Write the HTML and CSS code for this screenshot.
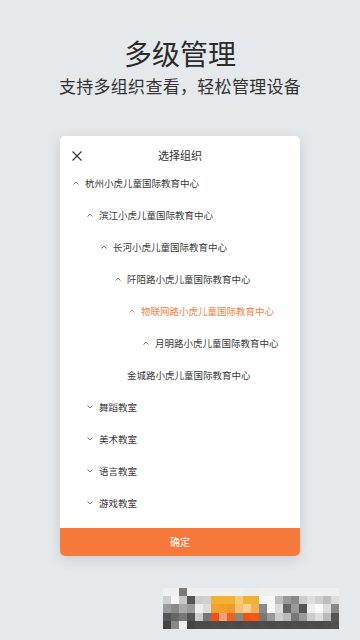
FILE: index.html
```html
<!DOCTYPE html>
<html lang="zh">
<head>
<meta charset="utf-8">
<title>多级管理</title>
<link rel="stylesheet" href="styles.css">
</head>
<body>
<div class="page">
  <header class="hero">
    <h1 class="hero-title">多级管理</h1>
    <p class="hero-sub">支持多组织查看，轻松管理设备</p>
  </header>

  <section class="card">
    <div class="card-head">
      <svg class="close" viewBox="0 0 10 10" width="10" height="10"><path d="M0.5 0.5 L9.5 9.5 M9.5 0.5 L0.5 9.5" stroke="#333" stroke-width="1.1" fill="none"/></svg>
      <span class="card-title">选择组织</span>
    </div>
    <ul class="tree">
      <li class="row lv0"><svg class="caret" viewBox="0 0 6 4"><polyline points="0.5,3.5 3,1 5.5,3.5"/></svg><span>杭州小虎儿童国际教育中心</span></li>
      <li class="row lv1"><svg class="caret" viewBox="0 0 6 4"><polyline points="0.5,3.5 3,1 5.5,3.5"/></svg><span>滨江小虎儿童国际教育中心</span></li>
      <li class="row lv2"><svg class="caret" viewBox="0 0 6 4"><polyline points="0.5,3.5 3,1 5.5,3.5"/></svg><span>长河小虎儿童国际教育中心</span></li>
      <li class="row lv3"><svg class="caret" viewBox="0 0 6 4"><polyline points="0.5,3.5 3,1 5.5,3.5"/></svg><span>阡陌路小虎儿童国际教育中心</span></li>
      <li class="row lv4 active"><svg class="caret" viewBox="0 0 6 4"><polyline points="0.5,3.5 3,1 5.5,3.5"/></svg><span>物联网路小虎儿童国际教育中心</span></li>
      <li class="row lv5"><svg class="caret" viewBox="0 0 6 4"><polyline points="0.5,3.5 3,1 5.5,3.5"/></svg><span>月明路小虎儿童国际教育中心</span></li>
      <li class="row lv3"><span class="caret-space"></span><span>金城路小虎儿童国际教育中心</span></li>
      <li class="row lv1"><svg class="caret" viewBox="0 0 6 4"><polyline points="0.5,0.5 3,3 5.5,0.5"/></svg><span>舞蹈教室</span></li>
      <li class="row lv1"><svg class="caret" viewBox="0 0 6 4"><polyline points="0.5,0.5 3,3 5.5,0.5"/></svg><span>美术教室</span></li>
      <li class="row lv1"><svg class="caret" viewBox="0 0 6 4"><polyline points="0.5,0.5 3,3 5.5,0.5"/></svg><span>语言教室</span></li>
      <li class="row lv1"><svg class="caret" viewBox="0 0 6 4"><polyline points="0.5,0.5 3,3 5.5,0.5"/></svg><span>游戏教室</span></li>
    </ul>
    <button class="confirm">确定</button>
  </section>

  <div class="mosaic" id="mosaic"></div>
</div>
<script src="mosaic.js"></script>
</body>
</html>
```

FILE: mosaic.js
```js
(function () {
  var rows = [
    ["#eef0f2","#eef0f2","#7a7a7a","#eef0f2","#eef0f2","#eef0f2","#f0f0ee","#f2f0ea","#f2f0ea","#eef0f2","#f0eeea","#f0eeea","#eef0f2","#eef0f2","#eef0f2","#eef0f2","#eef0f2","#eef0f2","#eef0f2","#eef0f2","#eef0f2","#eef0f2"],
    ["#cfcfcf","#f5f5f5","#c8c8c8","#555555","#cccccc","#d0d0d0","#f0b232","#f0b232","#f0b232","#f5c872","#f0b232","#f0b232","#f4f4f4","#f6f6f6","#bdbdbd","#9a9a9a","#8a8a8a","#cccccc","#dddddd","#cfcfcf","#bdbdbd","#dddddd"],
    ["#9a9a9a","#8a8a8a","#aaaaaa","#9a9a9a","#eeeeee","#dddddd","#f0a232","#f3a024","#f09a34","#f5c070","#f8d094","#f4b050","#8a8a8a","#fafafa","#dddddd","#666666","#9a9a9a","#555555","#eeeeee","#fafafa","#dddddd","#888888"],
    ["#555555","#666666","#777777","#555555","#cccccc","#777777","#f05214","#f4a07e","#f06222","#888888","#f45212","#f05a14","#777777","#9a9a9a","#cccccc","#bbbbbb","#777777","#9a9a9a","#cccccc","#dddddd","#bbbbbb","#555555"],
    ["#444444","#888888","#eeeeee","#444444","#4a4a4a","#4a4a4a","#4c4c4c","#4a4a4a","#4c4c4c","#4a4a4a","#4c4c4c","#4a4a4a","#4c4c4c","#4a4a4a","#4c4c4c","#4a4a4a","#4c4c4c","#4a4a4a","#4c4c4c","#4a4a4a","#4c4c4c","#505050"]
  ];
  var host = document.getElementById('mosaic');
  rows.forEach(function (r) {
    r.forEach(function (c) {
      var d = document.createElement('i');
      d.style.background = c;
      host.appendChild(d);
    });
  });
})();
```

FILE: styles.css
```css
* { box-sizing: border-box; }
html, body { margin: 0; padding: 0; }
body {
  background: #e6e9ec;
  font-family: "Noto Sans CJK SC", "Noto Sans", sans-serif;
  color: #333;
  width: 360px;
  height: 640px;
  overflow: hidden;
}
.page {
  position: relative;
  width: 360px;
  height: 640px;
  padding-top: 36px;
}
.hero { text-align: center; }
.hero-title {
  margin: 0;
  font-size: 28px;
  line-height: 34px;
  font-weight: 400;
  color: #2b2b2b;
  letter-spacing: 0;
}
.hero-sub {
  margin: 5px 0 0;
  font-size: 17px;
  line-height: 22px;
  color: #333;
  letter-spacing: 0.3px;
}
.card {
  width: 240px;
  margin: 39px auto 0;
  background: #fff;
  border-radius: 5px;
  box-shadow: 0 3px 14px rgba(60, 70, 80, 0.18);
  overflow: hidden;
}
.card-head {
  position: relative;
  height: 31px;
  padding-top: 12px;
  text-align: center;
}
.close {
  position: absolute;
  left: 12px;
  top: 15px;
}
.card-title {
  font-size: 11px;
  line-height: 14px;
  color: #333;
  display: block;
}
.tree {
  list-style: none;
  margin: 0;
  padding: 0 0 9px;
}
.row {
  height: 32px;
  display: flex;
  align-items: center;
  gap: 6px;
  font-size: 9.5px;
  color: #3a3a3a;
  white-space: nowrap;
}
.caret {
  width: 6px;
  height: 4px;
  flex: none;
  fill: none;
  stroke: #777;
  stroke-width: 0.9;
}
.caret-space { width: 6px; flex: none; }
.lv0 { padding-left: 13px; }
.lv1 { padding-left: 27px; }
.lv2 { padding-left: 41px; }
.lv3 { padding-left: 55px; }
.lv4 { padding-left: 69px; }
.lv5 { padding-left: 83px; }
.active { color: #f27f45; }
.active .caret { stroke: #f27f45; }
.confirm {
  display: block;
  width: 100%;
  height: 28px;
  border: 0;
  margin: 0;
  background: #f6793b;
  color: #fff;
  font-family: inherit;
  font-size: 10px;
  line-height: 28px;
  padding: 0;
}
.mosaic {
  position: absolute;
  left: 163px;
  top: 588px;
  width: 176px;
  height: 41px;
  display: grid;
  grid-template-columns: repeat(22, 8px);
  grid-auto-rows: 8.2px;
}
.mosaic i { display: block; }
```
